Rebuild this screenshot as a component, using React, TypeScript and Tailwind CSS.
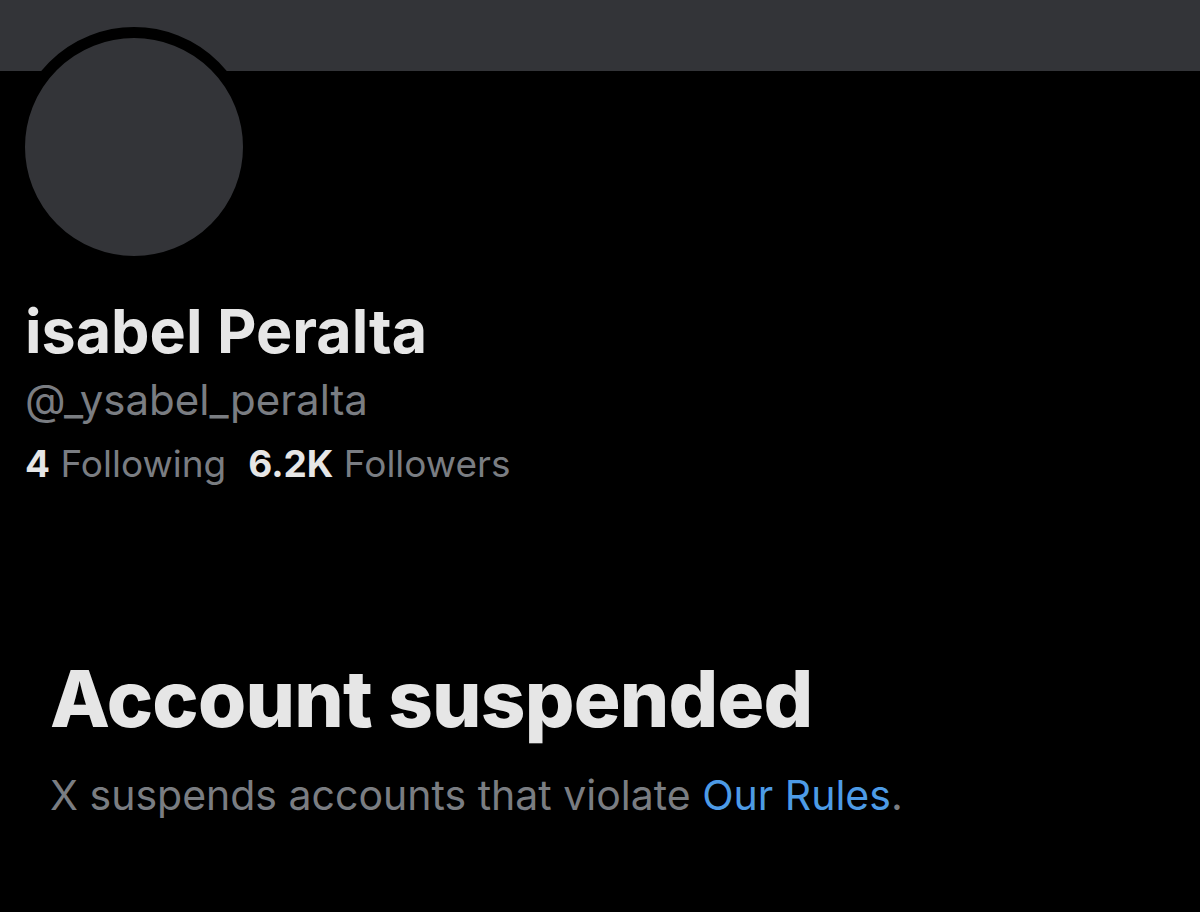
import React from "react";

const App: React.FC = () => {
  return (
    <div
      className="w-[1200px] h-[912px] bg-black overflow-hidden"
      style={{ fontFamily: "Inter, 'Liberation Sans', sans-serif" }}
    >
      {/* banner */}
      <div className="h-[71px] bg-[#333438]" />

      {/* avatar */}
      <div className="ml-[14px] -mt-[44px] w-[240px] h-[240px] rounded-full border-[11px] border-black bg-[#333438]" />

      <div className="px-[25px] mt-[33px]">
        <h1 className="text-[61px] leading-[62px] font-bold text-[#e6e6e6]">
          isabel Peralta
        </h1>
        <p className="text-[42px] leading-[62px] text-[#7a7d82] mt-[7px]">@_ysabel_peralta</p>
        <div className="flex gap-[22px] text-[37px] leading-[62px] mt-[2px]">
          <span>
            <span className="font-bold text-[#e6e6e6]">4</span>{" "}
            <span className="text-[#7a7d82]">Following</span>
          </span>
          <span>
            <span className="font-bold text-[#e6e6e6]">6.2K</span>{" "}
            <span className="text-[#7a7d82]">Followers</span>
          </span>
        </div>
      </div>

      <div className="px-[50px] mt-[159px]">
        <h2 className="text-[78px] leading-[90px] font-extrabold text-[#e6e6e6] tracking-[-0.8px]">
          Account suspended
        </h2>
        <p className="text-[41px] leading-[50px] text-[#7a7d82] mt-[26px]">
          X suspends accounts that violate{" "}
          <span className="text-[#4d9be6]">Our Rules</span>.
        </p>
      </div>
    </div>
  );
};

export default App;
